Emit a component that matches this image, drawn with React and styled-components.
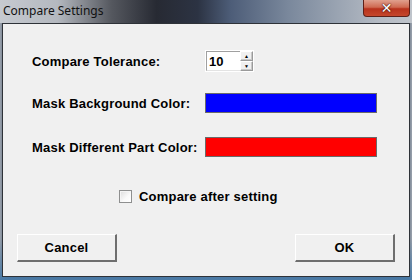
import React from "react";
import styled, { createGlobalStyle } from "styled-components";

const GlobalStyle = createGlobalStyle`
  html, body {
    margin: 0;
    padding: 0;
  }
  body {
    width: 412px;
    height: 280px;
    overflow: hidden;
  }
`;

const Window = styled.div`
  width: 412px;
  height: 280px;
  display: flex;
  flex-direction: column;
  background: linear-gradient(180deg, transparent 0%, transparent 85%, #4a7aa6 100%),
    linear-gradient(90deg, #9aa2ad 0%, #3b4a5e 2%, #5d7088 50%, #3b4a5e 98%, #9aa2ad 100%);
  font-family: "Liberation Sans", Arial, sans-serif;
`;

const TitleBar = styled.div`
  height: 23px;
  display: flex;
  justify-content: space-between;
  align-items: flex-start;
  background: linear-gradient(
    90deg,
    #c6cad0 0%,
    #b4b8bf 14%,
    #55585f 27%,
    #272a33 38%,
    #2c3343 48%,
    #4d5d78 56%,
    #7a889c 70%,
    #9aa4b2 82%,
    #b4bac3 92%,
    #bfc4cb 100%
  );
`;

const Title = styled.span`
  font-family: "Noto Sans", "Open Sans", sans-serif;
  font-size: 12px;
  color: #111;
  padding: 3px 0 0 3px;
  line-height: 15px;
`;

const CloseButton = styled.div`
  width: 47px;
  height: 17px;
  margin-right: 2px;
  box-sizing: border-box;
  border: 1px solid #5e2018;
  border-top: none;
  border-radius: 0 0 4px 4px;
  background: linear-gradient(180deg, #e0a08e 0%, #cf6a52 45%, #b8321c 55%, #c5472c 100%);
  display: flex;
  align-items: center;
  justify-content: center;
  color: #fff;
  font-family: "DejaVu Sans", sans-serif;
  font-weight: bold;
  font-size: 14px;
  line-height: 1;
  text-shadow: 0 0 2px #3a0c05, 0 0 1px #3a0c05;
`;

const Client = styled.div`
  flex: 1;
  margin: 0 2px 3px 2px;
  border: 1px solid #2e3238;
  background: #f0f0f0;
  display: flex;
  flex-direction: column;
  padding: 26px 13px 0 13px;
`;

const Row = styled.div`
  display: flex;
  align-items: center;
  height: 22px;
  margin-top: ${(p) => p.$gap || 0}px;
  padding-left: 16px;
`;

const Label = styled.span`
  width: 173px;
  font-size: 13px;
  font-weight: bold;
  letter-spacing: 0.2px;
  color: #000;
`;

const Spin = styled.div`
  display: flex;
  align-items: stretch;
  height: 22px;
  background: #fff;
  box-sizing: border-box;
  border: 1px solid #fff;
`;

const SpinInput = styled.div`
  width: 34px;
  box-sizing: border-box;
  border-top: 1px solid #a0a0a0;
  border-left: 1px solid #a0a0a0;
  border-bottom: 1px solid #e3e3e3;
  font-size: 13px;
  font-weight: bold;
  padding: 1px 0 0 2px;
  line-height: 18px;
  color: #000;
`;

const SpinButtons = styled.div`
  display: flex;
  flex-direction: column;
  width: 13px;
`;

const SpinBtn = styled.div`
  flex: 1;
  box-sizing: border-box;
  background: #f0f0f0;
  border: 1px solid #9a9a9a;
  border-top-color: #fff;
  border-left-color: #fff;
  box-shadow: inset -1px -1px 0 #c8c8c8;
  display: flex;
  align-items: center;
  justify-content: center;
  font-size: 5px;
  color: #000;
  line-height: 1;
`;

const Swatch = styled.div`
  width: 172px;
  height: 20px;
  box-sizing: border-box;
  border: 1px solid #6a6a6a;
  background: ${(p) => p.$color};
`;

const CheckRow = styled.label`
  display: flex;
  align-items: center;
  gap: 7px;
  margin-top: 31px;
  padding-left: 103px;
  font-size: 13px;
  font-weight: bold;
  letter-spacing: 0.2px;
  color: #000;
`;

const CheckBox = styled.span`
  width: 13px;
  height: 13px;
  box-sizing: border-box;
  border: 1px solid #8e8f8f;
  background: linear-gradient(135deg, #dcdcdc 0%, #fafafa 60%, #fff 100%);
  box-shadow: inset 1px 1px 0 #f4f4f4;
`;

const ButtonRow = styled.div`
  display: flex;
  justify-content: space-between;
  margin-top: 30px;
  padding: 0 1px;
`;

const Button = styled.div`
  width: 100px;
  height: 28px;
  box-sizing: border-box;
  background: #f0f0f0;
  border-top: 1px solid #fff;
  border-left: 1px solid #fff;
  border-right: 2px solid #6e6e6e;
  border-bottom: 2px solid #6e6e6e;
  display: flex;
  align-items: center;
  justify-content: center;
  font-size: 13px;
  font-weight: bold;
  letter-spacing: 0.2px;
  color: #000;
`;

export default function App() {
  return (
    <Window>
      <GlobalStyle />
      <TitleBar>
        <Title>Compare Settings</Title>
        <CloseButton>✕</CloseButton>
      </TitleBar>
      <Client>
        <Row>
          <Label>Compare Tolerance:</Label>
          <Spin>
            <SpinInput>10</SpinInput>
            <SpinButtons>
              <SpinBtn>▲</SpinBtn>
              <SpinBtn>▼</SpinBtn>
            </SpinButtons>
          </Spin>
        </Row>
        <Row $gap={20}>
          <Label>Mask Background Color:</Label>
          <Swatch $color="#0000ff" />
        </Row>
        <Row $gap={22}>
          <Label>Mask Different Part Color:</Label>
          <Swatch $color="#ff0000" />
        </Row>
        <CheckRow>
          <CheckBox />
          Compare after setting
        </CheckRow>
        <ButtonRow>
          <Button>Cancel</Button>
          <Button>OK</Button>
        </ButtonRow>
      </Client>
    </Window>
  );
}
